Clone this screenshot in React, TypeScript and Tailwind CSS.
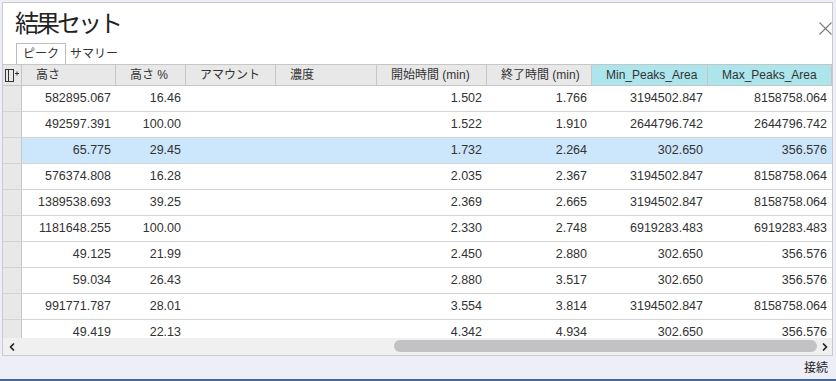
import { ChevronLeft, ChevronRight } from 'lucide-react';

type Row = string[];

const columns = [
  { label: '高さ', w: 'w-[94px]' },
  { label: '高さ %', w: 'w-[70px]' },
  { label: 'アマウント', w: 'w-[90px]' },
  { label: '濃度', w: 'w-[101px]' },
  { label: '開始時間 (min)', w: 'w-[110px]' },
  { label: '終了時間 (min)', w: 'w-[105px]' },
  { label: 'Min_Peaks_Area', w: 'w-[116px]', accent: true },
  { label: 'Max_Peaks_Area', w: 'w-[124px]', accent: true },
];

const rows: Row[] = [
  ['582895.067', '16.46', '', '', '1.502', '1.766', '3194502.847', '8158758.064'],
  ['492597.391', '100.00', '', '', '1.522', '1.910', '2644796.742', '2644796.742'],
  ['65.775', '29.45', '', '', '1.732', '2.264', '302.650', '356.576'],
  ['576374.808', '16.28', '', '', '2.035', '2.367', '3194502.847', '8158758.064'],
  ['1389538.693', '39.25', '', '', '2.369', '2.665', '3194502.847', '8158758.064'],
  ['1181648.255', '100.00', '', '', '2.330', '2.748', '6919283.483', '6919283.483'],
  ['49.125', '21.99', '', '', '2.450', '2.880', '302.650', '356.576'],
  ['59.034', '26.43', '', '', '2.880', '3.517', '302.650', '356.576'],
  ['991771.787', '28.01', '', '', '3.554', '3.814', '3194502.847', '8158758.064'],
  ['49.419', '22.13', '', '', '4.342', '4.934', '302.650', '356.576'],
];

const selectedRow = 2;

// column chooser glyph in the corner cell
function ColumnChooser() {
  return (
    <svg width="14" height="13" viewBox="0 0 14 13" fill="none" stroke="#333" strokeWidth="1">
      <rect x="0.5" y="0.5" width="8" height="12" />
      <line x1="3.5" y1="0.5" x2="3.5" y2="12.5" />
      <line x1="10" y1="4.5" x2="14" y2="4.5" />
      <line x1="12" y1="2.5" x2="12" y2="6.5" />
    </svg>
  );
}

function CloseIcon() {
  return (
    <svg width="13" height="13" viewBox="0 0 13 13" stroke="#7a7a7a" strokeWidth="1.1">
      <line x1="0.5" y1="0.5" x2="12.5" y2="12.5" />
      <line x1="12.5" y1="0.5" x2="0.5" y2="12.5" />
    </svg>
  );
}

export default function App() {
  return (
    <div className="w-[836px] h-[381px] bg-[#eeeef6] flex flex-col overflow-hidden font-['Liberation_Sans','Noto_Sans_CJK_JP',sans-serif] text-[#333]">
      {/* Window */}
      <div className="ml-[2px] mt-[2px] w-[831px] h-[354px] bg-white border border-[#c9c9cf] flex flex-col">
        {/* Title */}
        <div className="h-[40px] flex items-start justify-between">
          <h1 className="ml-[12px] mt-[3px] text-[24px] leading-[32px] tracking-[-3px] text-[#222] font-['Noto_Sans_CJK_JP',sans-serif]">
            結果セット
          </h1>
          <div className="mt-[19px]">
            <CloseIcon />
          </div>
        </div>

        {/* Tabs */}
        <div className="h-[21px] flex items-end pl-[13px] text-[12px]">
          <div className="h-[21px] px-[6px] border border-b-0 border-[#bdbdbd] flex items-center bg-white">ピーク</div>
          <div className="h-[21px] px-[4px] flex items-center">サマリー</div>
        </div>

        {/* Grid */}
        <div className="flex-1 flex flex-col min-h-0">
          {/* Header */}
          <div className="flex h-[22px] border-t border-b border-[#c6c6c6] bg-[#e8e8e8] text-[12px]">
            <div className="w-[19px] shrink-0 border-r border-[#c6c6c6] flex items-center justify-center">
              <ColumnChooser />
            </div>
            {columns.map((c) => (
              <div
                key={c.label}
                className={`${c.w} shrink-0 border-r border-[#c6c6c6] flex items-center pl-[14px] whitespace-nowrap overflow-hidden ${
                  c.accent ? 'bg-[#ade5ec]' : ''
                }`}
              >
                {c.label}
              </div>
            ))}
          </div>

          {/* Body */}
          <div className="flex-1 min-h-0 overflow-hidden text-[12.5px]">
            {rows.map((r, i) => (
              <div
                key={i}
                className={`flex h-[26px] border-b border-[#d4d4d4] ${i === selectedRow ? 'bg-[#cce6fc]' : 'bg-white'}`}
              >
                <div className="w-[19px] shrink-0 bg-[#e8e8e8] border-r border-[#c6c6c6]" />
                {r.map((v, j) => (
                  <div
                    key={j}
                    className={`${columns[j].w} shrink-0 flex items-center justify-end pr-[5px] whitespace-nowrap`}
                  >
                    {v}
                  </div>
                ))}
              </div>
            ))}
          </div>

          {/* Horizontal scrollbar */}
          <div className="h-[17px] bg-[#f0f0f0] flex items-center">
            <ChevronLeft className="ml-[3px] shrink-0" size={12} strokeWidth={3.5} color="#222" />
            <div className="flex-1 h-full relative">
              <div className="absolute left-[376px] right-[2px] top-[2px] bottom-[3px] rounded-full bg-[#c2c2c4]" />
            </div>
            <ChevronRight className="mr-[1px] shrink-0" size={12} strokeWidth={3.5} color="#222" />
          </div>
        </div>
      </div>

      {/* Status bar */}
      <div className="flex-1 flex items-center justify-end pr-[8px] text-[12px] text-[#222]">接続</div>
      <div className="h-[2px] bg-[#46679a]" />
    </div>
  );
}
